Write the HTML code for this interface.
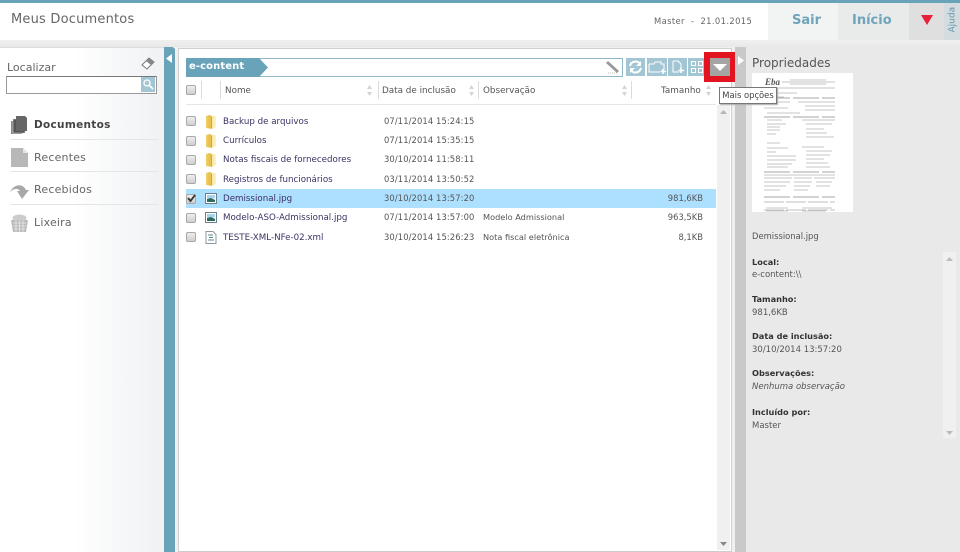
<!DOCTYPE html>
<html lang="pt">
<head>
<meta charset="utf-8">
<title>Meus Documentos</title>
<style>
html,body{margin:0;padding:0;width:960px;height:552px;overflow:hidden;background:#fff}
body{position:relative;font-family:"DejaVu Sans","Liberation Sans",sans-serif;font-size:9px;color:#555}
.a{position:absolute}
.t{position:absolute;white-space:nowrap;line-height:12px}
.cb{position:absolute;left:186px;width:8px;height:8px;border:1px solid #a8a8a8;border-radius:2px;background:linear-gradient(#eee,#cfcfcf)}
.link{color:#3c3264;left:223px;font-size:8.7px}
.date{color:#555;left:384px;font-size:8.4px;letter-spacing:.1px}
.size{color:#555;right:257px;font-size:8.4px}
.obs{color:#555;left:483px;font-size:8.2px}
.nav{position:absolute;left:10px;width:148px;height:1px;background:#e3e5e7}
.navt{position:absolute;left:34px;font-size:11px;line-height:14px;color:#666;letter-spacing:.2px;white-space:nowrap}
.h{position:absolute;top:85px;font-size:8.8px;color:#555;line-height:12px;white-space:nowrap}
.sep{position:absolute;top:81px;width:1px;height:18px;background:#dcdcdc}
.sort{position:absolute;top:85px;width:5px;height:11px}
.pl{position:absolute;left:752px;font-size:8.2px;line-height:12px;font-weight:bold;color:#333;white-space:nowrap}
.pv{position:absolute;left:752px;font-size:8.5px;line-height:12px;color:#555;white-space:nowrap}
.tb{position:absolute;top:58px;height:18px;background:#a3c6d4}
</style>
</head>
<body>
<!-- header -->
<div class="a" style="left:0;top:0;width:960px;height:3px;background:#69a3b9"></div>
<div class="a" style="left:0;top:40px;width:960px;height:7px;background:linear-gradient(#f0f0f0,#e8e8e8)"></div>
<div class="t" style="left:11px;top:12px;font-size:13px;line-height:16px;color:#666;letter-spacing:.2px">Meus Documentos</div>
<div class="t" style="left:654px;top:15px;font-size:8.4px;color:#666;letter-spacing:.38px">Master &nbsp;-&nbsp; 21.01.2015</div>
<div class="a" style="left:768px;top:3px;width:71px;height:37px;background:#f2f3f3"></div>
<div class="a" style="left:838px;top:3px;width:71px;height:37px;background:#e9eaea"></div>
<div class="a" style="left:909px;top:3px;width:35px;height:37px;background:#dfdfdf"></div>
<div class="a" style="left:944px;top:3px;width:16px;height:37px;background:#d5dcdf"></div>
<div class="t" style="left:792px;top:13px;font-size:13px;line-height:16px;font-weight:bold;color:#6fa5bb">Sair</div>
<div class="t" style="left:852px;top:13px;font-size:13px;line-height:16px;font-weight:bold;color:#6fa5bb">Início</div>
<svg class="a" style="left:921px;top:15px" width="12" height="10"><path d="M0 0H12L6 10Z" fill="#e8203c"/></svg>
<div class="t" style="left:946px;top:15px;font-size:9px;color:#5f98ae;transform:rotate(-90deg);transform-origin:center;width:13px;height:12px;text-align:center;line-height:12px;text-indent:-5px">Ajuda</div>

<!-- left sidebar -->
<div class="a" style="left:0;top:47px;width:164px;height:505px;background:linear-gradient(90deg,#fff 45%,#eff1f3 100%);border-top:1px solid #ddd;box-sizing:border-box"></div>
<div class="a" style="left:164px;top:47px;width:11px;height:505px;background:#69a3b9;border-radius:0 3px 0 0"></div>
<svg class="a" style="left:166px;top:54px" width="6" height="9"><path d="M6 0V9L0 4.500Z" fill="#fff"/></svg>
<div class="t" style="left:7px;top:61px;font-size:11px;line-height:14px;color:#666">Localizar</div>
<svg class="a" style="left:141px;top:57px" width="14" height="13"><path d="M1 8L8 1L13 5L6 12Z" fill="#fff" stroke="#777"/><path d="M8 1L13 5L10 8L5 4Z" fill="#888"/></svg>
<div class="a" style="left:6px;top:76px;width:149px;height:16px;border:1px solid #9a9a9a;border-top-color:#777;background:#fff"></div>
<div class="a" style="left:141px;top:77px;width:14px;height:15px;background:#a3c6d4"></div>
<svg class="a" style="left:142px;top:78px" width="12" height="12"><circle cx="5" cy="5" r="3" fill="none" stroke="#fff" stroke-width="1.3"/><path d="M7 7L11 11" stroke="#fff" stroke-width="1.6"/></svg>

<svg class="a" style="left:11px;top:116px" width="17" height="19"><rect x="0" y="5" width="11" height="13" fill="#888"/><rect x="2" y="3" width="12" height="14" fill="#555" stroke="#ddd" stroke-width=".5"/><path d="M5 0H14L16 2V15H5Z" fill="#666"/></svg>
<div class="navt" style="top:118px;font-weight:bold;color:#444;font-size:10.5px;letter-spacing:.3px">Documentos</div>
<div class="nav" style="top:139px"></div>
<svg class="a" style="left:11px;top:148px" width="17" height="19"><path d="M0 0H12L17 5V19H0Z" fill="#b8b8b8"/><path d="M12 0L17 5H12Z" fill="#e6e6e6"/></svg>
<div class="navt" style="top:151px">Recentes</div>
<div class="nav" style="top:171px"></div>
<svg class="a" style="left:10px;top:183px" width="19" height="17"><path d="M0 9C3 2 12 -1 16 7L19 7L12 16L7 8L10 8C8 5 4 5 0 9Z" fill="#a8a8a8"/></svg>
<div class="navt" style="top:183px">Recebidos</div>
<div class="nav" style="top:204px"></div>
<svg class="a" style="left:11px;top:214px" width="17" height="19"><ellipse cx="8.500" cy="4" rx="7" ry="3.500" fill="#ccc"/><path d="M0 6H17L15 18H2Z" fill="#bbb"/><path d="M2 9H15M2 12H15M3 15H14M5 6V18M8.500 6V18M12 6V18" stroke="#e8e8e8" stroke-width=".8"/></svg>
<div class="navt" style="top:216px">Lixeira</div>

<!-- main panel -->
<div class="a" style="left:175px;top:47px;width:560px;height:505px;background:#f0f0f0"></div>
<div class="a" style="left:178px;top:48px;background:#fff;border:1px solid #d0d0d0;border-bottom:1px solid #ccc;box-sizing:content-box;width:552px;height:502px"></div>
<!-- breadcrumb -->
<div class="a" style="left:186px;top:58px;width:436px;height:17px;border:1px solid #8fb7c6;border-left:0;background:#fff"></div>
<svg class="a" style="left:186px;top:58px" width="85" height="19"><path d="M0 0H73L82 9.500L73 19H0Z" fill="#69a3b9"/></svg>
<div class="t" style="left:189px;top:61px;font-size:10px;font-weight:bold;color:#fff;letter-spacing:.1px">e-content</div>
<svg class="a" style="left:605px;top:60px" width="16" height="15"><path d="M3 1L14 11L12 13L1 3Z" fill="#999"/><path d="M3 13H12" stroke="#bbb" stroke-dasharray="1 1"/></svg>
<!-- toolbar -->
<div class="tb" style="left:626px;width:19px"></div>
<svg class="a" style="left:628px;top:60px" width="15" height="14" fill="none" stroke="#fff" stroke-width="2"><path d="M2 6C3 1 10 0 12 4"/><path d="M13 8C12 13 5 14 3 10"/><path d="M13 1V6H8Z" fill="#fff" stroke="none"/><path d="M2 13V8H7Z" fill="#fff" stroke="none"/></svg>
<div class="tb" style="left:647px;width:20px"></div>
<svg class="a" style="left:648px;top:61px" width="19" height="14" fill="none" stroke="#fff"><path d="M1 3H6L7 1H13V3H16V9M12 11H1V3"/><path d="M15 8V13M12.500 10.500H18" stroke-width="1.600"/></svg>
<div class="tb" style="left:668px;width:19px"></div>
<svg class="a" style="left:672px;top:60px" width="14" height="15" fill="none" stroke="#fff"><path d="M1 1H6L9 4V8M7 12H1V1"/><path d="M9 8V13M6.500 10.500H12" stroke-width="1.600"/></svg>
<div class="tb" style="left:688px;width:19px"></div>
<svg class="a" style="left:690px;top:60px" width="15" height="14" fill="none" stroke="#fff"><rect x="1.500" y="1.500" width="4" height="4"/><rect x="8.500" y="1.500" width="4" height="4"/><rect x="1.500" y="8.500" width="4" height="4"/><rect x="8.500" y="8.500" width="4" height="4"/></svg>
<div class="a" style="left:704px;top:52px;width:32px;height:30px;background:#e3141f"></div>
<div class="a" style="left:710px;top:58px;width:20px;height:18px;background:#a4a4a4"></div>
<svg class="a" style="left:713px;top:64px" width="14" height="7"><path d="M0 0H14L7 7Z" fill="#fff"/></svg>

<!-- table head -->
<div class="cb" style="top:85px"></div>
<div class="sep" style="left:201px"></div>
<div class="sep" style="left:220px"></div>
<div class="sep" style="left:378px"></div>
<div class="sep" style="left:478px"></div>
<div class="sep" style="left:631px"></div>
<div class="h" style="left:225px">Nome</div>
<div class="h" style="left:382px">Data de inclusão</div>
<div class="h" style="left:483px">Observação</div>
<div class="h" style="left:661px">Tamanho</div>
<svg class="sort" style="left:367px"><path d="M2.500 0L5 4H0ZM2.500 11L0 7H5Z" fill="#d4d4d4"/></svg>
<svg class="sort" style="left:469px"><path d="M2.500 0L5 4H0ZM2.500 11L0 7H5Z" fill="#d4d4d4"/></svg>
<svg class="sort" style="left:622px"><path d="M2.500 0L5 4H0ZM2.500 11L0 7H5Z" fill="#d4d4d4"/></svg>
<svg class="sort" style="left:706px"><path d="M2.500 0L5 4H0ZM2.500 11L0 7H5Z" fill="#d4d4d4"/></svg>
<div class="a" style="left:186px;top:104px;width:530px;height:1px;background:#e6e6e6"></div>

<!-- scrollbar -->
<div class="a" style="left:717px;top:105px;width:13px;height:445px;background:#f0f0f0"></div>
<svg class="a" style="left:720px;top:110px" width="7" height="4"><path d="M3.500 0L7 4H0Z" fill="#b5b5b5"/></svg>
<svg class="a" style="left:720px;top:542px" width="7" height="4"><path d="M0 0H7L3.500 4Z" fill="#888"/></svg>

<!-- rows -->
<div class="a" style="left:186px;top:189px;width:530px;height:19px;background:#addffe"></div>

<div class="cb" style="top:116px"></div>
<div class="cb" style="top:136px"></div>
<div class="cb" style="top:155px"></div>
<div class="cb" style="top:174px"></div>
<div class="cb" style="top:194px"></div>
<svg class="a" style="left:187px;top:194px" width="9" height="9"><path d="M1 4L3.500 7L8 1" fill="none" stroke="#333" stroke-width="1.800"/></svg>
<div class="cb" style="top:213px"></div>
<div class="cb" style="top:232px"></div>

<svg width="0" height="0" style="position:absolute"><defs>
<linearGradient id="f" x1="0" x2="1"><stop offset="0" stop-color="#efcf6c"/><stop offset=".45" stop-color="#e6bb42"/><stop offset=".55" stop-color="#f6e49a"/><stop offset="1" stop-color="#fdf4cc"/></linearGradient>
<symbol id="folder" viewBox="0 0 11 14"><path d="M0 1L4 0L6 1H10V12L6 14L0 13Z" fill="url(#f)"/><path d="M5.500 1.500V13.500" stroke="#c99a28" stroke-width=".8"/></symbol>
<symbol id="image" viewBox="0 0 12 11"><rect x=".5" y=".5" width="11" height="10" fill="#fff" stroke="#6b7f8f"/><rect x="2" y="2" width="8" height="3.500" fill="#a8d4ea"/><path d="M2 6L6 5L10 7V9H2Z" fill="#2f6a5e"/></symbol>
</defs></svg>
<svg class="a" style="left:206px;top:115px" width="11" height="14"><use href="#folder"/></svg>
<svg class="a" style="left:206px;top:134px" width="11" height="14"><use href="#folder"/></svg>
<svg class="a" style="left:206px;top:153px" width="11" height="14"><use href="#folder"/></svg>
<svg class="a" style="left:206px;top:172px" width="11" height="14"><use href="#folder"/></svg>
<svg class="a" style="left:205px;top:193px" width="12" height="11"><use href="#image"/></svg>
<svg class="a" style="left:205px;top:212px" width="12" height="11"><use href="#image"/></svg>
<svg class="a" style="left:205px;top:231px" width="12" height="13"><path d="M1 .5H8L11 3.500V12.500H1Z" fill="#fff" stroke="#8a9aa5"/><path d="M3 4H8M3 9H9" stroke="#6b7f8f"/><path d="M4 6.500H8" stroke="#3a9a70"/></svg>

<div class="t link" style="top:116px">Backup de arquivos</div>
<div class="t link" style="top:135px">Currículos</div>
<div class="t link" style="top:154px">Notas fiscais de fornecedores</div>
<div class="t link" style="top:174px">Registros de funcionários</div>
<div class="t link" style="top:193px">Demissional.jpg</div>
<div class="t link" style="top:212px">Modelo-ASO-Admissional.jpg</div>
<div class="t link" style="top:232px">TESTE-XML-NFe-02.xml</div>

<div class="t date" style="top:115px">07/11/2014 15:24:15</div>
<div class="t date" style="top:134px">07/11/2014 15:35:15</div>
<div class="t date" style="top:153px">30/10/2014 11:58:11</div>
<div class="t date" style="top:173px">03/11/2014 13:50:52</div>
<div class="t date" style="top:192px">30/10/2014 13:57:20</div>
<div class="t date" style="top:211px">07/11/2014 13:57:00</div>
<div class="t date" style="top:231px">30/10/2014 15:26:23</div>

<div class="t obs" style="top:211px">Modelo Admissional</div>
<div class="t obs" style="top:231px">Nota fiscal eletrônica</div>

<div class="t size" style="top:192px">981,6KB</div>
<div class="t size" style="top:211px">963,5KB</div>
<div class="t size" style="top:231px">8,1KB</div>

<!-- right panel -->
<div class="a" style="left:735px;top:47px;width:11px;height:505px;background:#c9c9c9"></div>
<svg class="a" style="left:738px;top:56px" width="6" height="9"><path d="M0 0V9L6 4.500Z" fill="#fff"/></svg>
<div class="a" style="left:746px;top:47px;width:214px;height:505px;background:#e9e9e9"></div>
<div class="t" style="left:752px;top:56px;font-size:12px;line-height:14px;color:#555">Propriedades</div>

<!-- thumbnail -->
<div class="a" style="left:752px;top:73px;width:101px;height:139px;background:#fff"></div>
<svg class="a" style="left:752px;top:73px" width="101" height="139" stroke-width=".7" fill="none">
<text x="13" y="12" font-family="Liberation Serif, serif" font-size="9" font-style="italic" font-weight="bold" fill="#555" stroke="none">Eba</text>
<g stroke="#b4b4b4">
<path d="M38 7H74M30 9H83M38 11H74"/>
<path d="M12 15H83M12 20H32M12 24H32M30 20H45"/>
<path d="M46 29H83M12 29H38M12 35H36M53 33H83M53 37H83"/>
<path d="M15 40H48M15 47H30M15 51H34M15 54H28M15 57H28M15 61H24"/>
<path d="M50 47H83M54 51H80M54 56H72M54 60H75M54 64H82"/>
<path d="M15 70H28M15 75H36M15 79H24M15 83H44M15 87H44M15 91H40M15 94H36"/>
<path d="M50 74H72M54 78H80M54 82H78M54 86H72M54 90H76M54 94H78"/>
<path d="M12 102H83M12 105H40M42 105H60M62 105H83M12 109H38M42 109H60M64 109H80M12 113H34M42 113H58M64 113H78M12 117H28M42 117H56"/>
<path d="M12 129H83M12 137H83" stroke="#aaa" stroke-dasharray="20 2"/>
<path d="M14 135H36M14 138H36M50 135H80M50 138H74" stroke="#b4b4b4"/>
</g>
<path d="M12 99H83M12 124H83M12 44H83M12 25H83" stroke="#888" stroke-dasharray="26 3"/>
</svg>

<!-- tooltip -->
<div class="t" style="left:719px;top:87px;width:56px;height:15px;line-height:15px;border:1px solid #777;background:#fff;font-size:8.400px;color:#444;text-align:center;box-shadow:1px 1px 1px #aaa">Mais opções</div>

<div class="t" style="left:752px;top:230px;font-size:8.400px;color:#555">Demissional.jpg</div>
<div class="a" style="left:943px;top:252px;width:13px;height:186px;background:#f0f0f0"></div>
<svg class="a" style="left:946px;top:257px" width="7" height="4"><path d="M3.500 0L7 4H0Z" fill="#bbb"/></svg>
<svg class="a" style="left:946px;top:431px" width="7" height="4"><path d="M0 0H7L3.500 4Z" fill="#bbb"/></svg>

<div class="pl" style="top:256px">Local:</div>
<div class="pv" style="top:269px">e-content:\\</div>
<div class="pl" style="top:293px">Tamanho:</div>
<div class="pv" style="top:307px">981,6KB</div>
<div class="pl" style="top:330px">Data de inclusão:</div>
<div class="pv" style="top:344px">30/10/2014 13:57:20</div>
<div class="pl" style="top:367px">Observações:</div>
<div class="pv" style="top:381px;font-style:italic">Nenhuma observação</div>
<div class="pl" style="top:406px">Incluído por:</div>
<div class="pv" style="top:420px">Master</div>
</body>
</html>
